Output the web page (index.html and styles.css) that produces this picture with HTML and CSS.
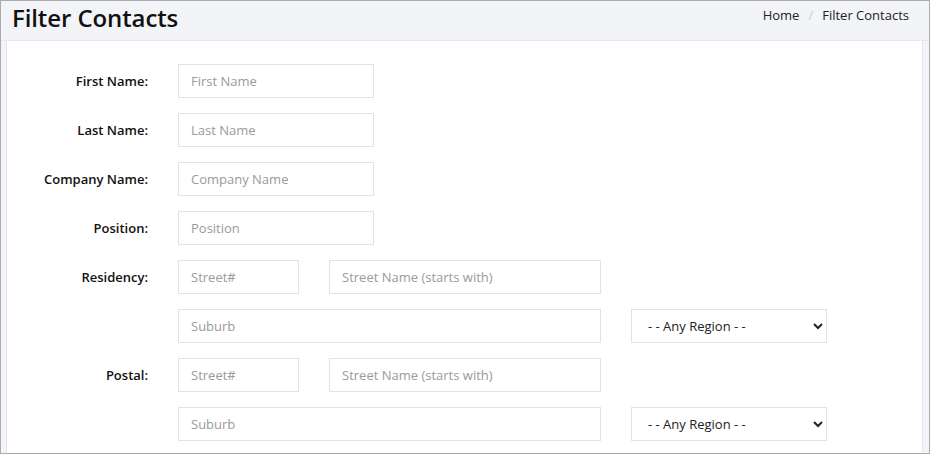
FILE: index.html
```html
<!DOCTYPE html>
<html lang="en">
<head>
    <meta charset="UTF-8">
    <title>Filter Contacts</title>
    <link rel="stylesheet" href="styles.css">
</head>
<body>
    <div class="window">
        <div class="page-header">
            <h1>Filter Contacts</h1>
            <div class="breadcrumb">
                <a href="#">Home</a>
                <span class="sep">/</span>
                <span>Filter Contacts</span>
            </div>
        </div>

        <div class="card">
            <form class="filter-form">
                <div class="form-row">
                    <label class="form-label">First Name:</label>
                    <input type="text" class="w-md" placeholder="First Name">
                </div>
                <div class="form-row">
                    <label class="form-label">Last Name:</label>
                    <input type="text" class="w-md" placeholder="Last Name">
                </div>
                <div class="form-row">
                    <label class="form-label">Company Name:</label>
                    <input type="text" class="w-md" placeholder="Company Name">
                </div>
                <div class="form-row">
                    <label class="form-label">Position:</label>
                    <input type="text" class="w-md" placeholder="Position">
                </div>

                <div class="form-row">
                    <label class="form-label">Residency:</label>
                    <input type="text" class="w-sm" placeholder="Street#">
                    <input type="text" class="w-lg" placeholder="Street Name (starts with)">
                </div>
                <div class="form-row">
                    <label class="form-label"></label>
                    <input type="text" class="w-xl" placeholder="Suburb">
                    <select class="w-md">
                        <option>- - Any Region - -</option>
                    </select>
                </div>

                <div class="form-row">
                    <label class="form-label">Postal:</label>
                    <input type="text" class="w-sm" placeholder="Street#">
                    <input type="text" class="w-lg" placeholder="Street Name (starts with)">
                </div>
                <div class="form-row">
                    <label class="form-label"></label>
                    <input type="text" class="w-xl" placeholder="Suburb">
                    <select class="w-md">
                        <option>- - Any Region - -</option>
                    </select>
                </div>
            </form>
        </div>
    </div>
</body>
</html>
```

FILE: styles.css
```css
* {
    box-sizing: border-box;
    font-family: 'Open Sans', sans-serif;
}

body {
    margin: 0;
    color: #212529;
}

.window {
    height: 454px;
    border: 1px solid #ababab;
    background-color: #f3f4f8;
    overflow: hidden;
}

/* header with title + breadcrumb */
.page-header {
    height: 40px;
    display: flex;
    justify-content: space-between;
    align-items: flex-start;
    padding: 0 20px 0 11px;
    border-bottom: 1px solid #e6e8ec;
}

.page-header h1 {
    margin: 0;
    font-size: 24px;
    font-weight: 600;
    line-height: 34px;
    letter-spacing: -0.1px;
    color: #111;
}

.breadcrumb {
    display: flex;
    gap: 9px;
    font-size: 13px;
    line-height: 28px;
    color: #222;
}

.breadcrumb a {
    color: #222;
    text-decoration: none;
}

.breadcrumb .sep {
    color: #ccc;
}

.card {
    height: 100%;
    margin: 0 6px 0 5px;
    padding-top: 23px;
    background-color: #fff;
    border-left: 1px solid #e3e6eb;
    border-right: 1px solid #e3e6eb;
}

.filter-form {
    display: flex;
    flex-direction: column;
    gap: 15px;
}

.form-row {
    display: flex;
    align-items: center;
    gap: 30px;
}

.form-label {
    width: 141px;
    text-align: right;
    font-size: 13px;
    font-weight: 600;
    line-height: 18px;
    color: #111;
}

input, select {
    height: 34px;
    padding: 0 12px;
    border: 1px solid #e2e2e2;
    border-radius: 0;
    font-size: 13px;
    color: #222;
    background-color: #fff;
    outline: none;
}

input::placeholder {
    color: #9a9a9a;
}

select {
    padding: 0 6px 0 12px;
}

.w-sm { width: 121px; }
.w-md { width: 196px; }
.w-lg { width: 272px; }
.w-xl { width: 423px; }
```
